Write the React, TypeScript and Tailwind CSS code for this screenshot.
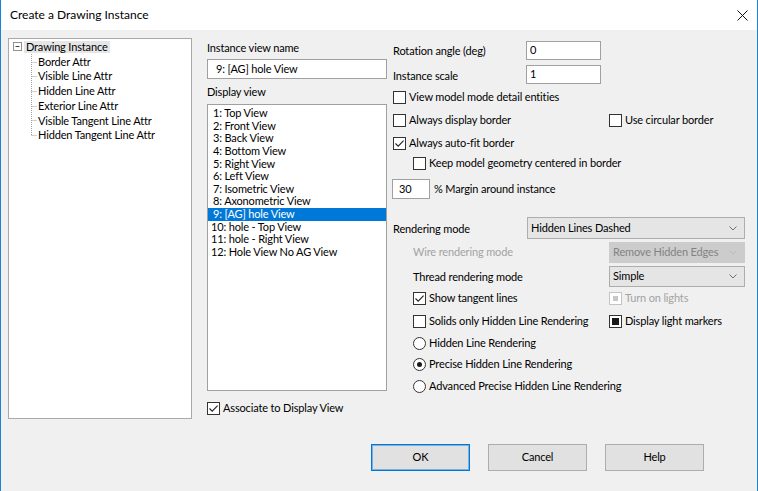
// Create a Drawing Instance dialog

type BoxState = 'off' | 'on' | 'mixed' | 'mixedDisabled';

function CheckBox({ state = 'off' }: { state?: BoxState }) {
  const disabled = state === 'mixedDisabled';
  return (
    <span
      className={
        'flex h-[13px] w-[13px] flex-shrink-0 items-center justify-center border bg-white ' +
        (disabled ? 'border-[#c4c4c4]' : 'border-[#333333]')
      }
    >
      {state === 'on' && (
        <svg width="11" height="11" viewBox="0 0 11 11">
          <path d="M1.5 5.5 L4.2 8.2 L9.6 2.6" fill="none" stroke="#222" strokeWidth="1.1" />
        </svg>
      )}
      {state === 'mixed' && <span className="h-[7px] w-[7px] bg-[#1a1a1a]" />}
      {disabled && <span className="h-[5px] w-[5px] bg-[#c8c8c8]" />}
    </span>
  );
}

function Radio({ on = false }: { on?: boolean }) {
  return (
    <span className="flex h-[13px] w-[13px] flex-shrink-0 items-center justify-center rounded-full border border-[#333333] bg-white">
      {on && <span className="h-[5px] w-[5px] rounded-full bg-[#1a1a1a]" />}
    </span>
  );
}

function Check({ state, label, disabled = false }: { state?: BoxState; label: string; disabled?: boolean }) {
  return (
    <div className="flex h-[13px] items-center gap-[3px]">
      <CheckBox state={state} />
      <span className={disabled ? 'text-[#a3a3a3]' : 'text-black'}>{label}</span>
    </div>
  );
}

function Option({ on, label }: { on?: boolean; label: string }) {
  return (
    <div className="flex h-[13px] items-center gap-[3px] pl-[21px]">
      <Radio on={on} />
      <span>{label}</span>
    </div>
  );
}

function Chevron({ color }: { color: string }) {
  return (
    <svg width="8" height="5" viewBox="0 0 8 5" className="flex-shrink-0">
      <path d="M0.5 0.5 L4 4 L7.5 0.5" fill="none" stroke={color} strokeWidth="1" />
    </svg>
  );
}

function Combo({ value, width, height, disabled = false }: { value: string; width: string; height: string; disabled?: boolean }) {
  return (
    <div
      className={
        'flex items-center justify-between border pl-[3px] pr-[7px] ' +
        width +
        ' ' +
        height +
        (disabled ? ' border-[#cccccc] bg-[#cccccc] text-[#838383]' : ' border-[#adadad] bg-[#e5e5e5] text-black')
      }
    >
      <span>{value}</span>
      <Chevron color={disabled ? '#bcbcbc' : '#707070'} />
    </div>
  );
}

function Field({ value, width }: { value: string; width: string }) {
  return (
    <div className={'flex h-[20px] items-center border border-[#a0a0a0] bg-white pl-[3px] ' + width}>{value}</div>
  );
}

const treeChildren = [
  'Border Attr',
  'Visible Line Attr',
  'Hidden Line Attr',
  'Exterior Line Attr',
  'Visible Tangent Line Attr',
  'Hidden Tangent Line Attr',
];

const views = [
  '1: Top View',
  '2: Front View',
  '3: Back View',
  '4: Bottom View',
  '5: Right View',
  '6: Left View',
  '7: Isometric View',
  '8: Axonometric View',
  '9: [AG] hole View',
  '10: hole - Top View',
  '11: hole - Right View',
  '12: Hole View No AG View',
];

function Tree() {
  return (
    <div className="relative h-[381px] w-[184px] flex-shrink-0 border border-[#a9a9a9] bg-white pt-[1px]">
      <svg className="absolute left-0 top-0" width="40" height="110" viewBox="0 0 40 110">
        <rect x="4.5" y="3.5" width="8" height="8" fill="white" stroke="#909090" />
        <path d="M6.5 7.5 H10.5" stroke="#404040" />
        <path d="M22.5 15 V96" stroke="#a0a0a0" strokeDasharray="1 1" />
        {[22.7, 37.3, 52, 66.6, 81.3, 96].map((y) => (
          <path key={y} d={`M22.5 ${Math.round(y) + 0.5} H28`} stroke="#a0a0a0" strokeDasharray="1 1" />
        ))}
      </svg>
      <div className="flex h-[14.7px] items-center pl-[15px]">
        <span className="bg-[#e6e6e6] px-[2px] leading-[12px]">Drawing Instance</span>
      </div>
      {treeChildren.map((c) => (
        <div key={c} className="flex h-[14.7px] items-center pl-[29px]">
          {c}
        </div>
      ))}
    </div>
  );
}

function MiddleColumn() {
  return (
    <div className="ml-[15px] flex w-[180px] flex-shrink-0 flex-col">
      <div className="mt-[3px] flex h-[14px] items-center">Instance view name</div>
      <div className="mt-[4px] flex h-[20px] items-center border border-[#a0a0a0] bg-white pl-[8px]">9: [AG] hole View</div>
      <div className="mt-[6px] flex h-[14px] items-center">Display view</div>
      <div className="mt-[5px] h-[287px] border border-[#a0a0a0] bg-white pt-[2px]">
        {views.map((v) => (
          <div
            key={v}
            className={
              'flex h-[12.64px] items-center pl-[3px] ' + (v.startsWith('9:') ? 'bg-[#0078d7] text-white' : 'text-black')
            }
          >
            <span className={v.length > 0 && v[1] === ':' ? 'pl-[2px]' : ''}>{v}</span>
          </div>
        ))}
      </div>
      <div className="mt-[11px]">
        <Check state="on" label="Associate to Display View" />
      </div>
    </div>
  );
}

function RightColumn() {
  return (
    <div className="ml-[5px] flex w-[353px] flex-col">
      <div className="mt-[3px] flex h-[19px] items-center">
        <span className="w-[134px] pl-[1px] pt-[2px]">Rotation angle (deg)</span>
        <div className="flex h-[19px] w-[75px] items-center border border-[#a0a0a0] bg-white pl-[3px]">0</div>
      </div>
      <div className="mt-[5px] flex h-[19px] items-center">
        <span className="w-[134px] pl-[1px] pt-[4px]">Instance scale</span>
        <div className="flex h-[19px] w-[75px] items-center border border-[#a0a0a0] bg-white pl-[3px]">1</div>
      </div>
      <div className="mt-[7px] pl-[1px]">
        <Check label="View model mode detail entities" />
      </div>
      <div className="mt-[10px] flex pl-[1px]">
        <div className="w-[216px]">
          <Check label="Always display border" />
        </div>
        <Check label="Use circular border" />
      </div>
      <div className="mt-[10px] pl-[1px]">
        <Check state="on" label="Always auto-fit border" />
      </div>
      <div className="mt-[7px] pl-[21px]">
        <Check label="Keep model geometry centered in border" />
      </div>
      <div className="mt-[9px] flex h-[20px] items-center gap-[4px]">
        <Field value="30" width="w-[38px] pl-[6px]" />
        <span>% Margin around instance</span>
      </div>
      <div className="mt-[18px] flex h-[22px] items-center">
        <span className="w-[135px] pl-[1px] pt-[2px]">Rendering mode</span>
        <Combo value="Hidden Lines Dashed" width="w-[218px]" height="h-[22px]" />
      </div>
      <div className="mt-[3px] flex h-[21px] items-center">
        <span className="w-[217px] pl-[21px] text-[#a3a3a3]">Wire rendering mode</span>
        <Combo value="Remove Hidden Edges" width="w-[136px]" height="h-[21px]" disabled />
      </div>
      <div className="mt-[3px] flex h-[21px] items-center">
        <span className="w-[217px] pl-[21px] pt-[2px]">Thread rendering mode</span>
        <Combo value="Simple" width="w-[136px]" height="h-[21px]" />
      </div>
      <div className="mt-[5px] flex">
        <div className="w-[217px] pl-[21px]">
          <Check state="on" label="Show tangent lines" />
        </div>
        <Check state="mixedDisabled" label="Turn on lights" disabled />
      </div>
      <div className="mt-[10px] flex">
        <div className="w-[217px] pl-[21px]">
          <Check label="Solids only Hidden Line Rendering" />
        </div>
        <Check state="mixed" label="Display light markers" />
      </div>
      <div className="mt-[9px]">
        <Option label="Hidden Line Rendering" />
      </div>
      <div className="mt-[8px]">
        <Option on label="Precise Hidden Line Rendering" />
      </div>
      <div className="mt-[9px]">
        <Option label="Advanced Precise Hidden Line Rendering" />
      </div>
    </div>
  );
}

function DialogButton({ label, isDefault = false }: { label: string; isDefault?: boolean }) {
  return (
    <button
      type="button"
      className={
        'flex h-[27px] w-[99px] items-center justify-center border bg-[#e1e1e1] ' +
        (isDefault ? 'border-[#0078d7] shadow-[inset_0_0_0_1px_rgba(0,120,215,0.45)]' : 'border-[#adadad]')
      }
    >
      {label}
    </button>
  );
}

export default function App() {
  return (
    <div className="flex h-[491px] w-[758px] flex-col border-x border-[#1883d7] bg-[#f0f0f0] font-['Lato',sans-serif] text-[11px] tracking-[-0.15px] text-black">
      {/* Title bar */}
      <div className="flex h-[30px] flex-shrink-0 items-center justify-between bg-white pl-[9px] pr-[9px]">
        <span className="text-[12px] tracking-normal">Create a Drawing Instance</span>
        <svg width="11" height="11" viewBox="0 0 11 11">
          <path d="M0.5 0.5 L10.5 10.5 M10.5 0.5 L0.5 10.5" stroke="#111" strokeWidth="1" />
        </svg>
      </div>

      {/* Body */}
      <div className="flex pl-[7px] pt-[8px]">
        <Tree />
        <MiddleColumn />
        <RightColumn />
      </div>

      {/* Buttons */}
      <div className="mt-[25px] flex justify-end gap-[18px] pr-[53px]">
        <DialogButton label="OK" isDefault />
        <DialogButton label="Cancel" />
        <DialogButton label="Help" />
      </div>
    </div>
  );
}
